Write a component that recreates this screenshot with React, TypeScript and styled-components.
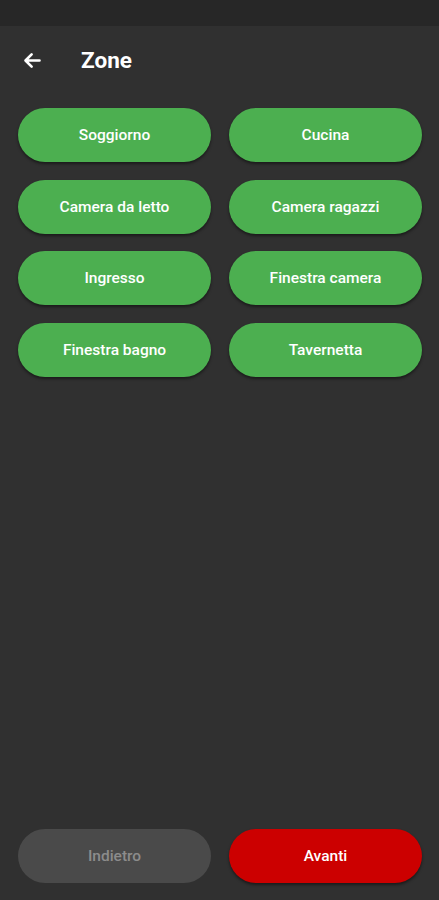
import styled, { createGlobalStyle } from 'styled-components';

const GlobalStyle = createGlobalStyle`
  html, body {
    margin: 0;
    padding: 0;
    background: #303030;
  }
  * {
    box-sizing: border-box;
  }
`;

const Screen = styled.div`
  min-height: 100vh;
  display: flex;
  flex-direction: column;
  background: #303030;
  font-family: Roboto, 'Liberation Sans', sans-serif;
`;

const StatusBar = styled.div`
  height: 26px;
  background: #272727;
`;

const TopBar = styled.header`
  height: 67px;
  display: flex;
  align-items: center;
  padding: 1px 0 0 21px;
  gap: 38px;
`;

const BackButton = styled.button`
  width: 22px;
  height: 22px;
  padding: 0;
  border: 0;
  background: transparent;
  display: flex;
  align-items: center;
  justify-content: center;
  color: #ffffff;
`;

const Title = styled.h1`
  margin: 0;
  font-size: 22.5px;
  font-weight: 700;
  color: #ffffff;
`;

const ZoneGrid = styled.div`
  display: grid;
  grid-template-columns: 1fr 1fr;
  gap: 17.6px 18px;
  padding: 15px 17px 0 18px;
`;

const Pill = styled.button<{ $tone: 'green' | 'grey' | 'red' }>`
  height: 54px;
  border: 0;
  border-radius: 27px;
  font-family: inherit;
  font-size: 15.5px;
  font-weight: 500;
  background: ${(p) =>
    p.$tone === 'green' ? '#4caf50' : p.$tone === 'red' ? '#cc0000' : '#4a4a4a'};
  color: ${(p) => (p.$tone === 'grey' ? '#8c8c8c' : '#ffffff')};
  box-shadow: ${(p) =>
    p.$tone === 'grey' ? 'none' : '0 2px 3px rgba(0, 0, 0, 0.45)'};
`;

const Spacer = styled.div`
  flex: 1;
`;

const BottomBar = styled.div`
  display: grid;
  grid-template-columns: 1fr 1fr;
  gap: 18px;
  padding: 0 17px 17px 18px;
`;

const zones = [
  'Soggiorno',
  'Cucina',
  'Camera da letto',
  'Camera ragazzi',
  'Ingresso',
  'Finestra camera',
  'Finestra bagno',
  'Tavernetta',
];

export default function App() {
  return (
    <>
      <GlobalStyle />
      <Screen>
        <StatusBar />
        <TopBar>
          <BackButton aria-label="Indietro">
            <svg width="21" height="21" viewBox="0 0 24 24" fill="none">
              <path
                d="M20 12H4.5M11 5l-7 7 7 7"
                stroke="#ffffff"
                strokeWidth="3"
                strokeLinecap="round"
                strokeLinejoin="round"
              />
            </svg>
          </BackButton>
          <Title>Zone</Title>
        </TopBar>
        <ZoneGrid>
          {zones.map((z) => (
            <Pill key={z} $tone="green">
              {z}
            </Pill>
          ))}
        </ZoneGrid>
        <Spacer />
        <BottomBar>
          <Pill $tone="grey">Indietro</Pill>
          <Pill $tone="red">Avanti</Pill>
        </BottomBar>
      </Screen>
    </>
  );
}
